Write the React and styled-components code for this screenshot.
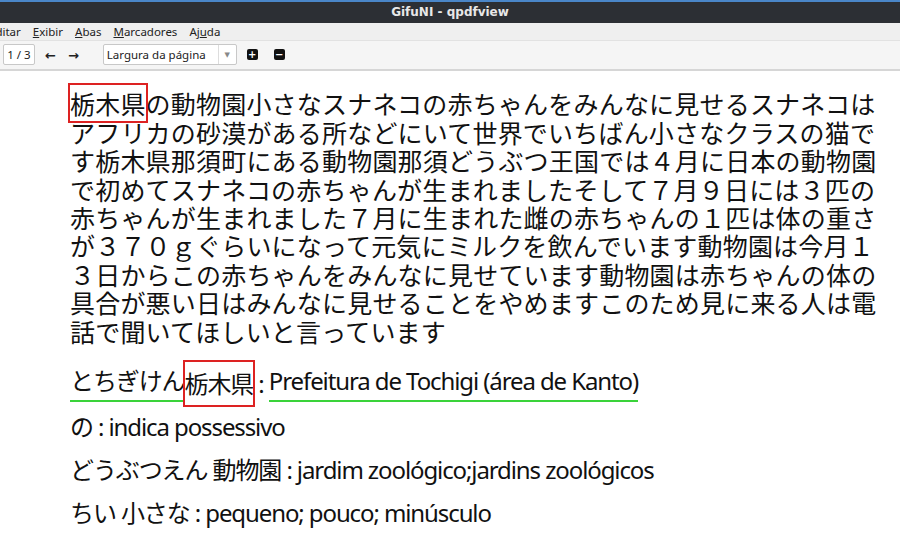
import React from "react";
import styled, { createGlobalStyle } from "styled-components";

const G = createGlobalStyle`
  body { margin:0; background:#fff; overflow:hidden; }
  * { box-sizing:border-box; }
`;
const Win = styled.div`width:900px;height:534px;display:flex;flex-direction:column;font-family:"Noto Sans","DejaVu Sans",sans-serif;`;
const Title = styled.div`height:23px;background:#2c2f34;border-top:2px solid #4a86c8;color:#e8e8e8;font:bold 12px "DejaVu Sans",sans-serif;display:flex;align-items:center;justify-content:center;`;
const Menu = styled.div`height:18px;background:#efefef;display:flex;gap:12px;align-items:center;font-size:11.5px;color:#222;margin-left:-11px;border-bottom:1px solid #e2e2e2;
  u{text-decoration:underline;}`;
const Tool = styled.div`height:31px;background:#f5f5f5;border-bottom:2px solid #d6d6d6;display:flex;align-items:center;padding-left:3px;font-size:11.5px;color:#222;`;
const PageBox = styled.div`width:32px;height:21px;border:1px solid #c8c8c8;background:#fff;border-radius:2px;display:flex;align-items:center;justify-content:center;`;
const Arrow = styled.span`font-size:13px;font-weight:bold;margin-left:${p=>p.ml}px;`;
const Combo = styled.div`margin-left:24px;width:134px;height:21px;border:1px solid #c8c8c8;background:#fff;border-radius:2px;display:flex;align-items:center;padding-left:3px;justify-content:space-between;
  span.a{width:18px;border-left:1px solid #ddd;height:100%;display:flex;align-items:center;justify-content:center;color:#888;font-size:7px;}`;
const Zoom = styled.div`width:11px;height:11px;background:#111;border-radius:2px;margin-left:${p=>p.ml}px;display:flex;align-items:center;justify-content:center;color:#fff;font:bold 10px "DejaVu Sans",sans-serif;line-height:1;`;
const Content = styled.div`flex:1;padding:18px 0 0 70px;color:#111;`;
const Para = styled.div`font:25px/28.4px "Noto Sans CJK JP",sans-serif;letter-spacing:0.2px;white-space:pre;`;
const Box = styled.span`outline:2px solid #d22;`;
const Dict = styled.div`margin-top:${p=>p.mt}px;font:24px/43px "Noto Sans","Noto Sans CJK JP",sans-serif;letter-spacing:-1.1px;white-space:pre;display:flex;align-items:center;`;
const Und = styled.span`border-bottom:2px solid #3ad33a;padding-bottom:4px;line-height:30px;`;

const lines = [
  "アフリカの砂漠がある所などにいて世界でいちばん小さなクラスの猫で",
  "す栃木県那須町にある動物園那須どうぶつ王国では４月に日本の動物園",
  "で初めてスナネコの赤ちゃんが生まれましたそして７月９日には３匹の",
  "赤ちゃんが生まれました７月に生まれた雌の赤ちゃんの１匹は体の重さ",
  "が３７０ｇぐらいになって元気にミルクを飲んでいます動物園は今月１",
  "３日からこの赤ちゃんをみんなに見せています動物園は赤ちゃんの体の",
  "具合が悪い日はみんなに見せることをやめますこのため見に来る人は電",
  "話で聞いてほしいと言っています",
];

export default function App(){
  return <Win><G/>
    <Title>GifuNI - qpdfview</Title>
    <Menu><span>Editar</span><span><u>E</u>xibir</span><span><u>A</u>bas</span><span><u>M</u>arcadores</span><span>Aj<u>u</u>da</span></Menu>
    <Tool>
      <PageBox>1 / 3</PageBox>
      <Arrow ml={10}>←</Arrow><Arrow ml={12}>→</Arrow>
      <Combo>Largura da página<span className="a">▼</span></Combo>
      <Zoom ml={10}>+</Zoom><Zoom ml={16}>−</Zoom>
    </Tool>
    <Content>
      <Para><Box>栃木県</Box>の動物園小さなスナネコの赤ちゃんをみんなに見せるスナネコは</Para>
      {lines.map((l,i)=><Para key={i}>{l}</Para>)}
      <Dict mt={17}><Und>とちぎけん</Und> <Box>栃木県</Box> : <Und>Prefeitura de Tochigi (área de Kanto)</Und></Dict>
      <Dict mt={0}>の : indica possessivo</Dict>
      <Dict mt={0}>どうぶつえん 動物園 : jardim zoológico;jardins zoológicos</Dict>
      <Dict mt={0}>ちい 小さな : pequeno; pouco; minúsculo</Dict>
    </Content>
  </Win>;
}
